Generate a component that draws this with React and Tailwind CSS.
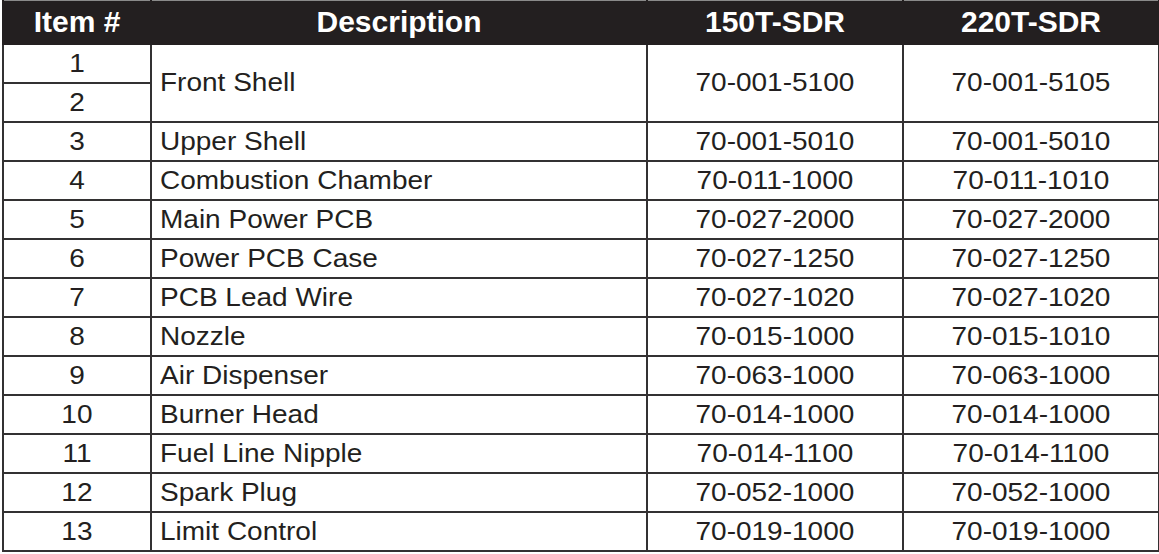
import React from "react";

const rows = [
  ["3", "Upper Shell", "70-001-5010", "70-001-5010"],
  ["4", "Combustion Chamber", "70-011-1000", "70-011-1010"],
  ["5", "Main Power PCB", "70-027-2000", "70-027-2000"],
  ["6", "Power PCB Case", "70-027-1250", "70-027-1250"],
  ["7", "PCB Lead Wire", "70-027-1020", "70-027-1020"],
  ["8", "Nozzle", "70-015-1000", "70-015-1010"],
  ["9", "Air Dispenser", "70-063-1000", "70-063-1000"],
  ["10", "Burner Head", "70-014-1000", "70-014-1000"],
  ["11", "Fuel Line Nipple", "70-014-1100", "70-014-1100"],
  ["12", "Spark Plug", "70-052-1000", "70-052-1000"],
  ["13", "Limit Control", "70-019-1000", "70-019-1000"],
];

// body text in the source is a little wider than plain Arial
function T({ children, left }) {
  return (
    <span className={"inline-block scale-x-[1.12] " + (left ? "origin-left" : "origin-center")}>
      {children}
    </span>
  );
}

const cell = "border-2 border-[#333132] p-0 h-[39px] leading-none text-[25px] text-[#231f20]";
const head = "border-2 border-[#231f20] border-t-[1px] border-t-[#8a8a8a] pt-[1px] leading-none";

export default function App() {
  return (
    <div className="w-[1159px] h-[554px] bg-white pl-[2px] font-['Liberation_Sans',Arial,sans-serif]">
      <table className="border-collapse table-fixed w-[1156px]">
        <colgroup>
          <col className="w-[148px]" />
          <col className="w-[496px]" />
          <col className="w-[256px]" />
          <col className="w-[256px]" />
        </colgroup>
        <thead>
          <tr className="bg-[#231f20] text-white text-[30px] font-bold h-[43px]">
            <th className={head}>Item #</th>
            <th className={head}>Description</th>
            <th className={head}>150T-SDR</th>
            <th className={head}>220T-SDR</th>
          </tr>
        </thead>
        <tbody>
          <tr>
            <td className={cell + " text-center"}><T>1</T></td>
            <td rowSpan={2} className={cell + " pl-[8px]"}><T left>Front Shell</T></td>
            <td rowSpan={2} className={cell + " text-center"}><T>70-001-5100</T></td>
            <td rowSpan={2} className={cell + " text-center"}><T>70-001-5105</T></td>
          </tr>
          <tr>
            <td className={cell + " text-center"}><T>2</T></td>
          </tr>
          {rows.map(([n, d, a, b]) => (
            <tr key={n}>
              <td className={cell + " text-center"}><T>{n}</T></td>
              <td className={cell + " pl-[8px]"}><T left>{d}</T></td>
              <td className={cell + " text-center"}><T>{a}</T></td>
              <td className={cell + " text-center"}><T>{b}</T></td>
            </tr>
          ))}
        </tbody>
      </table>
    </div>
  );
}
